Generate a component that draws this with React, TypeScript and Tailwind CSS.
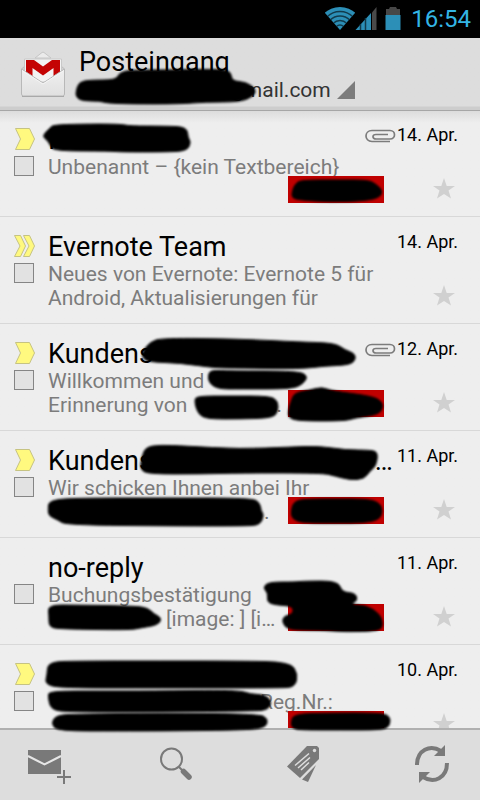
import type { ReactNode } from "react";

type Mail = {
  id: number;
  sender: ReactNode;
  marker?: "single" | "double";
  clip?: boolean;
  date: string;
  line1: ReactNode;
  line2?: ReactNode;
  tag?: boolean;
};

const mails: Mail[] = [
  { id: 1, sender: "I", marker: "single", clip: true, date: "14. Apr.", line1: "Unbenannt – {kein Textbereich}", tag: true },
  {
    id: 2,
    sender: "Evernote Team",
    marker: "double",
    date: "14. Apr.",
    line1: "Neues von Evernote: Evernote 5 für",
    line2: "Android, Aktualisierungen für",
  },
  {
    id: 3,
    sender: "Kundens",
    marker: "single",
    clip: true,
    date: "12. Apr.",
    line1: "Willkommen und",
    line2: (
      <>
        Erinnerung von<span className="inline-block w-[89px]" />.
      </>
    ),
    tag: true,
  },
  {
    id: 4,
    sender: (
      <>
        Kundens<span className="inline-block w-[222px]" />…
      </>
    ),
    marker: "single",
    date: "11. Apr.",
    line1: "Wir schicken Ihnen anbei Ihr",
    line2: (
      <>
        <span className="inline-block w-[216px]" />.
      </>
    ),
    tag: true,
  },
  {
    id: 5,
    sender: "no-reply",
    date: "11. Apr.",
    line1: "Buchungsbestätigung",
    line2: (
      <>
        <span className="inline-block w-[118px]" />
        [image: ] [i…
      </>
    ),
    tag: true,
  },
  {
    id: 6,
    sender: "",
    marker: "single",
    date: "10. Apr.",
    line1: (
      <>
        <span className="inline-block w-[212px]" />
        Reg.Nr.:
      </>
    ),
    tag: true,
  },
];

type Point = [number, number];

// marker strokes that hide private data
const scribbles: Point[][] = [
  [[76, 91], [79, 82], [90, 80], [116, 80], [119, 73], [130, 70], [170, 70], [222, 69], [231, 72], [232, 81], [246, 82], [256, 89], [254, 96], [240, 102], [205, 102], [180, 104], [130, 104], [106, 103], [100, 101], [82, 101], [76, 97]],
  [[42, 136], [50, 128], [53, 125], [80, 124], [120, 124], [130, 126], [165, 126], [187, 127], [188, 138], [191, 142], [187, 151], [165, 152], [120, 152], [110, 151], [54, 151], [50, 145], [48, 141]],
  [[292, 192], [295, 184], [301, 180], [340, 180], [368, 180], [376, 184], [383, 191], [379, 198], [362, 201], [330, 202], [300, 200], [292, 198]],
  [[143, 351], [150, 342], [162, 338], [240, 339], [300, 342], [335, 343], [345, 350], [354, 353], [356, 359], [350, 365], [325, 366], [300, 369], [240, 368], [215, 368], [180, 363], [148, 362], [142, 357]],
  [[208, 375], [211, 370], [230, 371], [298, 371], [308, 376], [303, 384], [292, 389], [240, 389], [218, 389], [209, 383]],
  [[194, 400], [198, 396], [230, 396], [270, 396], [278, 401], [278, 412], [272, 418], [240, 419], [207, 419], [198, 414]],
  [[291, 402], [294, 393], [310, 390], [322, 387], [332, 391], [372, 396], [383, 402], [382, 411], [375, 415], [355, 418], [345, 421], [300, 421], [288, 418], [289, 408]],
  [[142, 456], [146, 447], [160, 445], [185, 446], [240, 449], [290, 447], [320, 446], [345, 450], [372, 450], [378, 453], [376, 466], [370, 471], [364, 479], [350, 480], [335, 476], [322, 473], [240, 473], [200, 474], [150, 474], [140, 470]],
  [[48, 510], [49, 500], [80, 498], [160, 498], [252, 498], [260, 503], [261, 511], [264, 515], [260, 525], [245, 526], [180, 526], [66, 525], [58, 520], [49, 516]],
  [[291, 511], [294, 501], [308, 499], [340, 499], [365, 499], [379, 502], [383, 511], [379, 520], [362, 523], [340, 523], [303, 523], [292, 519]],
  [[49, 616], [48, 605], [75, 605], [135, 606], [148, 608], [154, 614], [162, 618], [158, 625], [140, 628], [130, 630], [60, 629], [49, 627]],
  [[263, 588], [268, 582], [295, 582], [305, 581], [338, 581], [342, 592], [355, 593], [358, 600], [350, 605], [366, 605], [380, 614], [383, 624], [380, 631], [345, 632], [320, 630], [288, 630], [282, 622], [284, 616], [293, 614], [293, 606], [275, 605], [267, 602], [268, 593]],
  [[47, 675], [48, 662], [75, 661], [160, 661], [240, 661], [290, 662], [298, 674], [295, 687], [280, 688], [160, 688], [60, 688], [45, 684]],
  [[48, 697], [49, 691], [100, 691], [150, 691], [238, 690], [250, 694], [266, 695], [272, 703], [267, 710], [255, 711], [160, 712], [70, 712], [51, 710]],
  [[51, 724], [56, 715], [80, 714], [160, 713], [260, 714], [268, 719], [266, 727], [250, 730], [160, 731], [120, 731], [58, 731]],
  [[291, 722], [294, 714], [330, 713], [380, 713], [390, 716], [390, 726], [382, 730], [340, 730], [300, 730], [292, 728]],
];

// closed curve that runs smoothly through the middle of each edge
const blobPath = (points: Point[]) => {
  const mid = (a: Point, b: Point) => `${(a[0] + b[0]) / 2} ${(a[1] + b[1]) / 2}`;
  const last = points[points.length - 1];
  const curves = points.map((p, i) => `Q${p[0]} ${p[1]} ${mid(p, points[(i + 1) % points.length])}`);
  return `M${mid(last, points[0])} ${curves.join(" ")}Z`;
};

const Scribbles = () => (
  <svg className="absolute top-0 left-0 pointer-events-none" width="480" height="800" viewBox="0 0 480 800" aria-hidden="true">
    <filter id="soft" x="-5%" y="-30%" width="110%" height="160%">
      <feGaussianBlur stdDeviation="1.1" />
    </filter>
    {scribbles.map((points, i) => (
      <path key={i} d={blobPath(points)} fill="#000" stroke="#000" strokeWidth="1" strokeLinejoin="round" filter="url(#soft)" />
    ))}
  </svg>
);

const StatusBar = () => (
  <div className="flex h-[38px] shrink-0 items-center justify-end bg-black pr-[9px]">
    <svg width="30" height="24" viewBox="325 7 30 24" aria-label="WLAN">
      <clipPath id="fan">
        <path d="M340 30L322 9.500V0H358V9.500Z" />
      </clipPath>
      <g clipPath="url(#fan)">
        <circle cx="340" cy="30" r="23" fill="#2c8fb7" />
        <g fill="none" stroke="#123b4c" strokeWidth="1.500">
          <circle cx="340" cy="30" r="18.500" />
          <circle cx="340" cy="30" r="14" />
          <circle cx="340" cy="30" r="9.500" />
          <circle cx="340" cy="30" r="5" />
        </g>
      </g>
    </svg>
    <svg width="22" height="24" viewBox="353 7 22 24" aria-label="Netz">
      <path d="M353.500 30L369 13V30Z" fill="#2c8fb7" />
      <path d="M358.500 24V30M363.500 18V30" stroke="#123b4c" strokeWidth="1.500" />
      <path d="M370 12.500L374.500 7V30H370Z" fill="#4a4a4a" />
    </svg>
    <svg className="ml-2" width="16" height="24" viewBox="383 7 16 24" aria-label="Akku">
      <path d="M384 9H387L388 7H394L395 9H398V22H384Z" fill="#474747" />
      <path d="M383.500 15H398.500V30H383.500Z" fill="#2c8fb7" />
    </svg>
    <span className="ml-2.5 text-[24px] leading-8 text-[#33b5e5]">16:54</span>
  </div>
);

const GmailLogo = () => (
  <svg className="shrink-0" width="46" height="48" viewBox="20 50 46 48" aria-hidden="true">
    <defs>
      <linearGradient id="paper" x1="0" y1="0" x2="0" y2="1">
        <stop offset="0" stopColor="#f0f0f0" />
        <stop offset="1" stopColor="#e0e0e0" />
      </linearGradient>
    </defs>
    <path d="M35 58L42 52.500Q43 51.700 44 52.500L51 58Z" fill="#ebebeb" stroke="#c6c6c6" />
    <path d="M21.500 69L25 66V80H61V66L64.500 69V90H21.500Z" fill="#d2d2d2" stroke="#bdbdbd" />
    <path d="M24.500 59H61.500V82H24.500Z" fill="#f3f3f3" stroke="#c9c9c9" />
    <path d="M26 60H34L43 66.500L52 60H60V80H53.500V68L43 75.500L32.500 68V80H26Z" fill="#c40404" />
    <path d="M21.500 69L43 83L64.500 69V94Q64.500 96 62.500 96H23.500Q21.500 96 21.500 94Z" fill="url(#paper)" stroke="#b8b8b8" />
    <path d="M22 70.500L43 84L64 70.500" fill="none" stroke="#f6f6f6" />
    <path d="M22 96.500H64" stroke="#a9a9a9" />
  </svg>
);

const Header = () => (
  <header className="flex h-[73px] shrink-0 border-b border-[#a6a6a6] bg-linear-to-t from-[#cdcdcd] from-[3px] to-[#dddddd] to-[4px] pl-5">
    <div className="pt-3">
      <GmailLogo />
    </div>
    <div className="ml-[13px] pt-2">
      <h1 className="text-[27px] leading-8">Posteingang</h1>
      <button type="button" className="flex items-center text-[21px] leading-6 text-[#333333]">
        <span className="inline-block w-[153px]" />
        gmail.com
        <svg className="ml-1.5" width="18" height="18" viewBox="0 0 18 18" aria-hidden="true">
          <path d="M18 0V18H0Z" fill="#7c7c7c" />
        </svg>
      </button>
    </div>
  </header>
);

const Marker = ({ kind }: { kind?: "single" | "double" }) => (
  <svg className="h-[22px] w-[22px]" viewBox="0 0 22 22" aria-hidden="true">
    <g fill="#fff97f" stroke="#c6c382">
      {kind === "single" && <path d="M1.500 0.500H15.500L20.500 11L15.500 21.500H1.500L6.500 11Z" />}
      {kind === "double" && (
        <>
          <path d="M0.500 0.500H6.500L11.500 11L6.500 21.500H0.500L6 11Z" />
          <path d="M9.500 0.500H15.500L20.500 11L15.500 21.500H9.500L15 11Z" />
        </>
      )}
    </g>
  </svg>
);

const Clip = () => (
  <svg className="mt-0.5 shrink-0" width="32" height="14" viewBox="0 0 32 14" aria-label="Anhang">
    <path
      d="M25 12.500H7C-1 12.500 -1 1.500 7 1.500H25C31 1.500 31 10 25 10H11C7 10 7 5.500 11 5.500H23"
      fill="none"
      stroke="#7c7c7c"
      strokeWidth="1.700"
    />
  </svg>
);

const MailRow = ({ mail }: { mail: Mail }) => (
  <li className="flex h-[107px] shrink-0 border-b border-[#d8d8d8] pr-[22px] pl-[14px] first:h-[106px] first:*:-mt-px">
    <div className="flex w-[34px] shrink-0 flex-col gap-1.5 pt-[18px]">
      <Marker kind={mail.marker} />
      <input
        type="checkbox"
        aria-label={`Nachricht ${mail.id} auswählen`}
        className="size-5 appearance-none border border-[#858585] bg-[#e2e2e2]"
      />
    </div>
    <div className="min-w-0 flex-1 pt-[13px]">
      <div className="flex h-8">
        <p className="min-w-0 flex-1 overflow-hidden text-[27px] leading-[34px] whitespace-nowrap">{mail.sender}</p>
        <div className="flex h-6 items-center">
          {mail.clip && <Clip />}
          <time className="w-[61px] shrink-0 text-right text-[18px] leading-6 whitespace-nowrap">{mail.date}</time>
        </div>
      </div>
      <div className="flex">
        <div className="min-w-0 flex-1 text-[21px] leading-6 text-[#7c7c7c]">
          <p className="whitespace-nowrap">{mail.line1}</p>
          <div className="flex h-6 items-end">
            <p className="min-w-0 flex-1 whitespace-nowrap">{mail.line2}</p>
            {mail.tag && <span className="h-[27px] w-24 shrink-0 bg-[#c00000]" />}
          </div>
        </div>
        <div className="flex w-[74px] shrink-0 items-end justify-end pr-[3px] pb-[3px]">
          <button type="button" aria-label="Markieren">
            <svg className="block" width="22" height="22" viewBox="0 0 22 22" aria-hidden="true">
              <path d="M11 0L13.700 8H22L15.500 12.500L18 20.500L11 16L4 20.500L6.500 12.500L0 8H8.300Z" fill="#d0d0d0" />
            </svg>
          </button>
        </div>
      </div>
    </div>
  </li>
);

const Footer = () => (
  <footer className="flex h-[72px] shrink-0 items-center justify-between border-t-2 border-[#b0b0b0] bg-[#dddddd] px-4">
    <button type="button" aria-label="Schreiben" className="flex h-12 w-16 items-center justify-center">
      <svg width="64" height="48" viewBox="16 741 64 48">
        <path d="M28 750H61V774H28Z" fill="#797979" />
        <path d="M28 756L44.500 764.500L61 756" fill="none" stroke="#e6e6e6" strokeWidth="2" />
        <path d="M57 777H71M64 770V784" stroke="#797979" strokeWidth="2" />
      </svg>
    </button>
    <button type="button" aria-label="Suchen" className="flex h-12 w-16 items-center justify-center">
      <svg width="64" height="48" viewBox="144 741 64 48" fill="none" stroke="#797979">
        <circle cx="171.500" cy="759" r="10.500" strokeWidth="2" />
        <path d="M178.500 766.500L183 771" strokeWidth="2" />
        <path d="M183.500 771.500L189 777" strokeWidth="5.500" strokeLinecap="round" />
      </svg>
    </button>
    <button type="button" aria-label="Labels" className="flex h-12 w-16 items-center justify-center">
      <svg width="64" height="48" viewBox="272 741 64 48">
        <path d="M307 746H317L319 748V759L300 778L287 766.500Z" fill="#797979" />
        <circle cx="314.500" cy="750.500" r="1.700" fill="#dddddd" />
        <path d="M295 765.500L309 753.500M298 768L310 757.500M301 770L309 762.500" stroke="#dddddd" strokeWidth="1.500" />
        <path d="M316 765L302 779.500L308 782Z" fill="#797979" />
      </svg>
    </button>
    <button type="button" aria-label="Aktualisieren" className="flex h-12 w-16 items-center justify-center">
      <svg width="64" height="48" viewBox="400 741 64 48">
        <g fill="none" stroke="#797979" strokeWidth="4">
          <path d="M417 765C417 750 430 744 441 751" />
          <path d="M447 763C447 778 434 784 423 777" />
        </g>
        <path d="M445 745V756H434Z" fill="#797979" />
        <path d="M419 783V772H430Z" fill="#797979" />
      </svg>
    </button>
  </footer>
);

const App = () => {
  return (
    <div className="relative flex h-screen flex-col overflow-hidden bg-[#eeeeee] font-[Roboto,sans-serif] text-black">
      <StatusBar />
      <Header />
      <ul className="flex min-h-0 flex-1 flex-col overflow-y-auto bg-linear-to-b from-[#dcdcdc] to-[#eeeeee] to-[12px] [scrollbar-width:none]">
        {mails.map((mail) => (
          <MailRow key={mail.id} mail={mail} />
        ))}
      </ul>
      <Footer />
      <Scribbles />
    </div>
  );
};

export default App;
